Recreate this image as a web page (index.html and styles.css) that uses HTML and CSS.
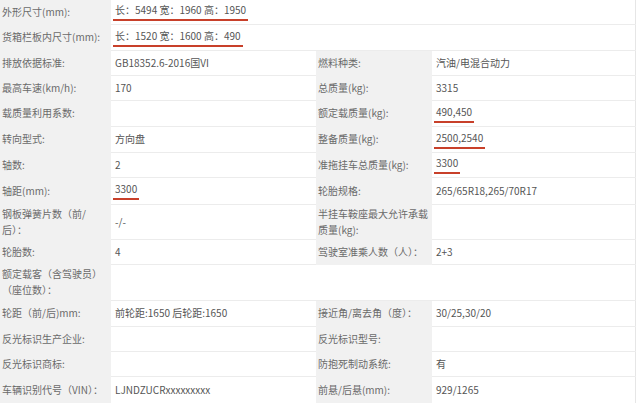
FILE: index.html
```html
<!DOCTYPE html>
<html lang="zh-CN">
<head>
    <meta charset="UTF-8">
    <meta name="viewport" content="width=device-width, initial-scale=1.0">
    <title>车辆参数</title>
    <link rel="stylesheet" href="styles.css">
</head>
<body>
    <table class="spec">
        <colgroup>
            <col class="c-label">
            <col class="c-value">
            <col class="c-label2">
            <col class="c-value2">
        </colgroup>
        <tr class="h24">
            <td class="label">外形尺寸(mm):</td>
            <td class="value" colspan="3"><span class="mark">长：5494 宽：1960 高：1950</span></td>
        </tr>
        <tr class="h26">
            <td class="label">货箱栏板内尺寸(mm):</td>
            <td class="value" colspan="3"><span class="mark">长：1520 宽：1600 高：490</span></td>
        </tr>
        <tr class="h25">
            <td class="label">排放依据标准:</td>
            <td class="value">GB18352.6-2016国VI</td>
            <td class="label">燃料种类:</td>
            <td class="value">汽油/电混合动力</td>
        </tr>
        <tr class="h25">
            <td class="label">最高车速(km/h):</td>
            <td class="value">170</td>
            <td class="label">总质量(kg):</td>
            <td class="value">3315</td>
        </tr>
        <tr class="h26">
            <td class="label">载质量利用系数:</td>
            <td class="value"></td>
            <td class="label">额定载质量(kg):</td>
            <td class="value"><span class="mark">490,450</span></td>
        </tr>
        <tr class="h26">
            <td class="label">转向型式:</td>
            <td class="value">方向盘</td>
            <td class="label">整备质量(kg):</td>
            <td class="value"><span class="mark">2500,2540</span></td>
        </tr>
        <tr class="h25">
            <td class="label">轴数:</td>
            <td class="value">2</td>
            <td class="label">准拖挂车总质量(kg):</td>
            <td class="value"><span class="mark">3300</span></td>
        </tr>
        <tr class="h27">
            <td class="label">轴距(mm):</td>
            <td class="value"><span class="mark">3300</span></td>
            <td class="label">轮胎规格:</td>
            <td class="value">265/65R18,265/70R17</td>
        </tr>
        <tr class="h35">
            <td class="label">钢板弹簧片数（前/<br>后）：</td>
            <td class="value">-/-</td>
            <td class="label">半挂车鞍座最大允许承载质量(kg):</td>
            <td class="value"></td>
        </tr>
        <tr class="h25">
            <td class="label">轮胎数:</td>
            <td class="value">4</td>
            <td class="label">驾驶室准乘人数（人）：</td>
            <td class="value">2+3</td>
        </tr>
        <tr class="h36">
            <td class="label">额定载客（含驾驶员）（座位数）：</td>
            <td class="value" colspan="3"></td>
        </tr>
        <tr class="h26">
            <td class="label">轮距（前/后)mm:</td>
            <td class="value">前轮距:1650 后轮距:1650</td>
            <td class="label">接近角/离去角（度）：</td>
            <td class="value">30/25,30/20</td>
        </tr>
        <tr class="h25">
            <td class="label">反光标识生产企业:</td>
            <td class="value"></td>
            <td class="label">反光标识型号:</td>
            <td class="value"></td>
        </tr>
        <tr class="h25">
            <td class="label">反光标识商标:</td>
            <td class="value"></td>
            <td class="label">防抱死制动系统:</td>
            <td class="value">有</td>
        </tr>
        <tr class="h27">
            <td class="label">车辆识别代号（VIN）：</td>
            <td class="value">LJNDZUCRxxxxxxxxx</td>
            <td class="label">前悬/后悬(mm):</td>
            <td class="value">929/1265</td>
        </tr>
    </table>
</body>
</html>
```

FILE: styles.css
```css
body {
    margin: 0;
    background: #fff;
    font-family: "Noto Sans CJK SC", "Noto Sans", sans-serif;
    font-size: 10px;
}
.spec {
    width: 635px;
    border-collapse: collapse;
    table-layout: fixed;
    border-right: 1px solid #e6e6e6;
}
.c-label { width: 111px; }
.c-value { width: 205px; }
.c-label2 { width: 116px; }
.c-value2 { width: 203px; }
.spec td {
    padding: 0 0 0 4px;
    vertical-align: middle;
    line-height: 16px;
    border-bottom: 1px solid #ececec;
    color: #555;
}
.spec td.label {
    background-color: #f1f1f1;
    color: #6a6a6a;
    padding-left: 2px;
    border-bottom-color: #f1f1f1;
}
.h24 { height: 24px; }
.h25 { height: 25px; }
.h26 { height: 26px; }
.h27 { height: 27px; }
.h35 { height: 35px; }
.h36 { height: 36px; }
.mark {
    display: inline-block;
    margin-left: -2px;
    padding: 0 2px 1px 2px;
    border-bottom: 2px solid #c8402a;
}
```
